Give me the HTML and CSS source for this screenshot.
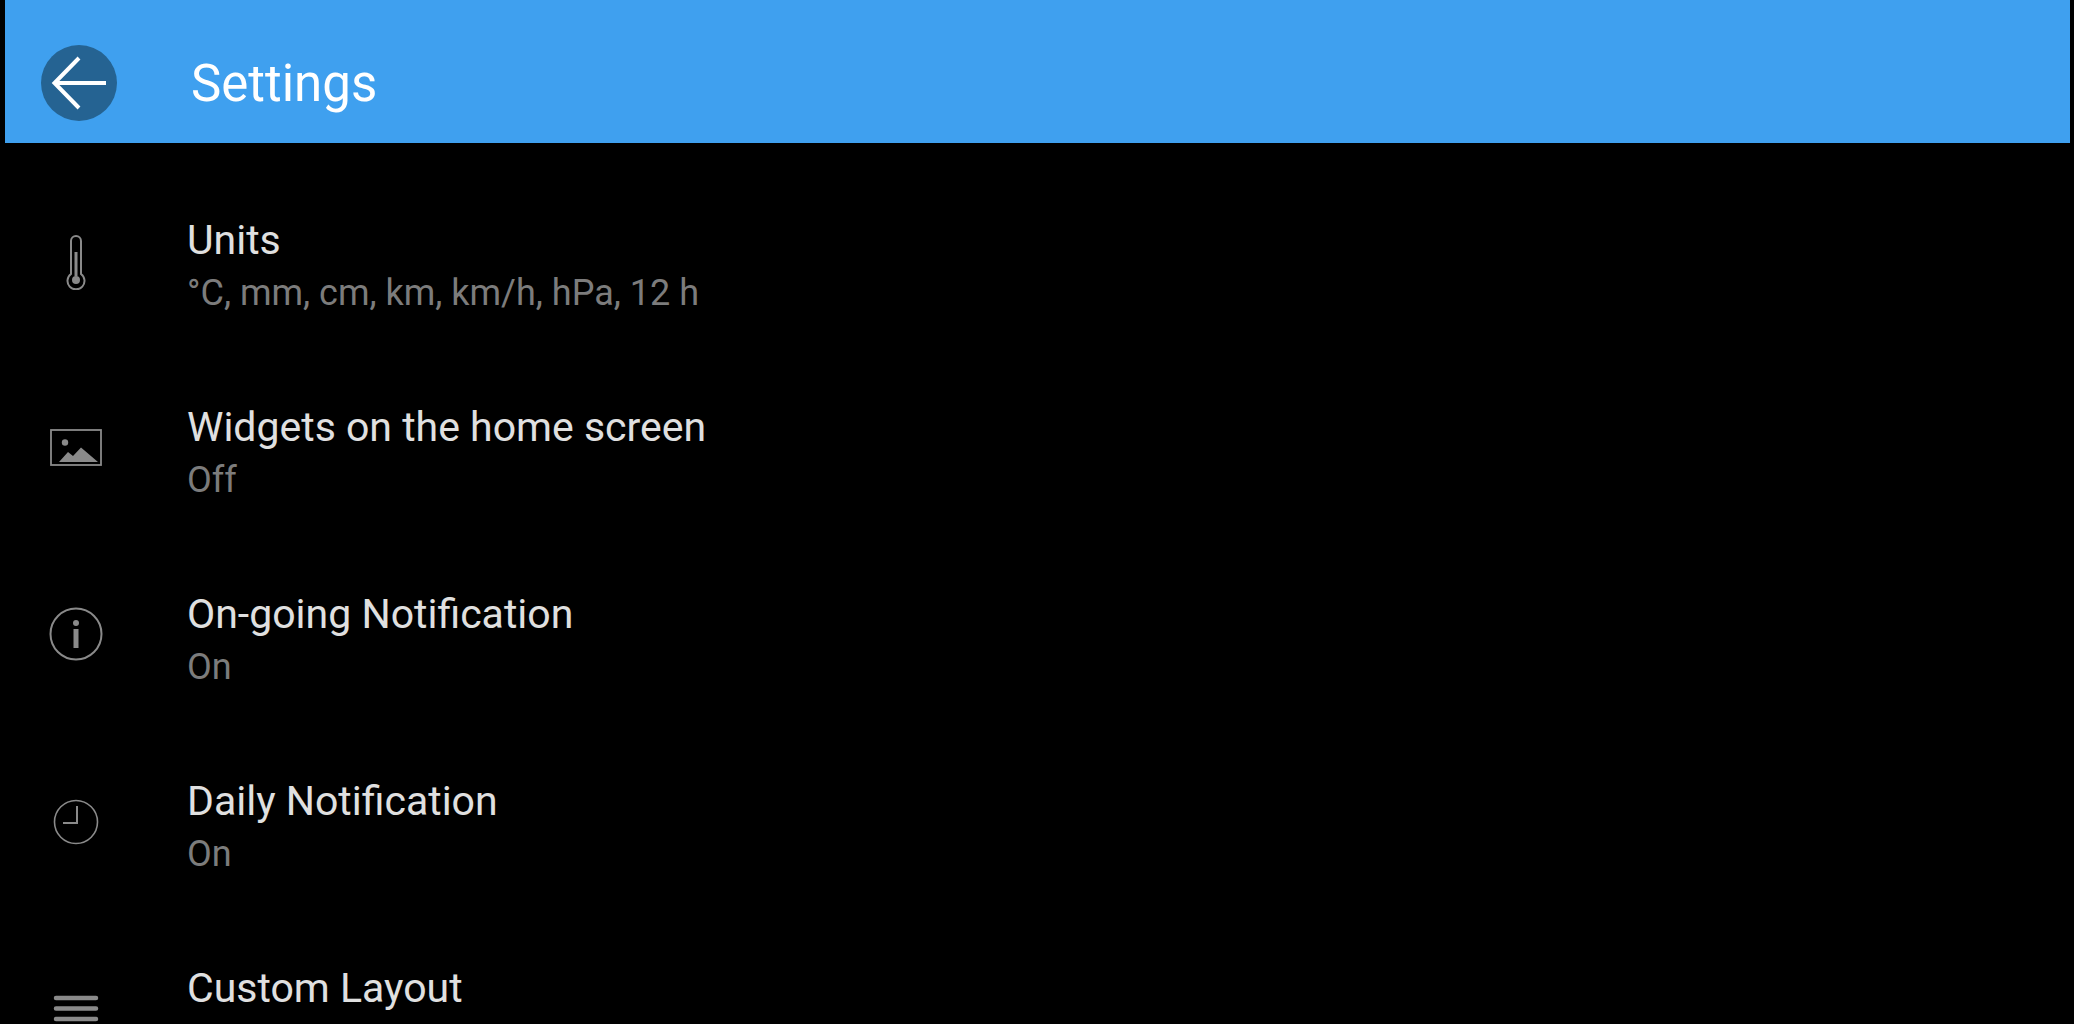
FILE: index.html
```html
<!DOCTYPE html>
<html lang="en">
<head>
<meta charset="utf-8">
<title>Settings</title>
<link rel="stylesheet" href="styles.css">
</head>
<body>
<header class="appbar">
  <button class="back" aria-label="Back">
    <svg viewBox="0 0 76 76" width="76" height="76"><path d="M65 38H14M38 13L13.500 38L38 63" fill="none" stroke="#fff" stroke-width="4"/></svg>
  </button>
  <h1 class="appbar-title">Settings</h1>
</header>
<main class="list">
  <section class="row">
    <div class="icon"><svg viewBox="0 0 60 60" width="60" height="60"><path d="M25 44V11a5 5 0 0 1 10 0V44a8.500 8.500 0 1 1-10 0Z" fill="none" stroke="#8a8a8a" stroke-width="2"/><path d="M30 22V46" stroke="#8a8a8a" stroke-width="3"/><circle cx="30" cy="50" r="4" fill="#8a8a8a"/></svg></div>
    <div class="text"><div class="title">Units</div><div class="sub">°C, mm, cm, km, km/h, hPa, 12 h</div></div>
  </section>
  <section class="row">
    <div class="icon"><svg viewBox="0 0 60 60" width="60" height="60"><rect x="5" y="13" width="50" height="35" fill="none" stroke="#8a8a8a" stroke-width="1.800"/><circle cx="19" cy="25.500" r="3.200" fill="#8a8a8a"/><path d="M13 45L22 35L27 39L35 30.500L52 45Z" fill="#8a8a8a"/></svg></div>
    <div class="text"><div class="title">Widgets on the home screen</div><div class="sub">Off</div></div>
  </section>
  <section class="row">
    <div class="icon"><svg viewBox="0 0 60 60" width="60" height="60"><circle cx="30" cy="30" r="25.500" fill="none" stroke="#8a8a8a" stroke-width="2"/><circle cx="30" cy="19" r="3" fill="#8a8a8a"/><rect x="27.500" y="25" width="5" height="19" fill="#8a8a8a"/></svg></div>
    <div class="text"><div class="title">On-going Notification</div><div class="sub">On</div></div>
  </section>
  <section class="row">
    <div class="icon"><svg viewBox="0 0 60 60" width="60" height="60"><circle cx="30" cy="31" r="21.500" fill="none" stroke="#8a8a8a" stroke-width="1.600"/><path d="M31 15V32H17" fill="none" stroke="#8a8a8a" stroke-width="2"/></svg></div>
    <div class="text"><div class="title">Daily Notification</div><div class="sub">On</div></div>
  </section>
  <section class="row">
    <div class="icon"><svg viewBox="0 0 60 60" width="60" height="60"><path d="M10 20H50M10 30.500H50M10 41H50" fill="none" stroke="#8a8a8a" stroke-width="4.500" stroke-linecap="round"/></svg></div>
    <div class="text"><div class="title">Custom Layout</div></div>
  </section>
</main>
</body>
</html>
```
FILE: styles.css
```css
html, body {
  margin: 0;
  height: 100%;
  background: #000;
  overflow: hidden;
}
body {
  font-family: Roboto, "Noto Sans", sans-serif;
}
.appbar {
  display: flex;
  align-items: center;
  box-sizing: border-box;
  height: 143px;
  margin: 0 4px 0 5px;
  padding: 22px 0 0 36px;
  background: #3fa0ef;
}
.back {
  display: flex;
  width: 76px;
  height: 76px;
  padding: 0;
  border: 0;
  border-radius: 50%;
  background: #256392;
}
.appbar-title {
  margin: 2px 0 0 74px;
  font-size: 51px;
  font-weight: 400;
  color: #fff;
}
.list {
  padding: 23px 0 0 5px;
}
.row {
  display: flex;
  align-items: center;
  height: 187px;
}
.icon {
  display: flex;
  justify-content: center;
  flex: none;
  width: 141px;
  margin-right: 41px;
}
.text {
  box-sizing: border-box;
  min-height: 104px;
  margin-top: 13px;
}
.title {
  font-size: 41px;
  line-height: 52px;
  color: #e0e0e0;
}
.sub {
  margin-top: 1px;
  font-size: 36px;
  line-height: 52px;
  color: #7c7c7c;
}
```
